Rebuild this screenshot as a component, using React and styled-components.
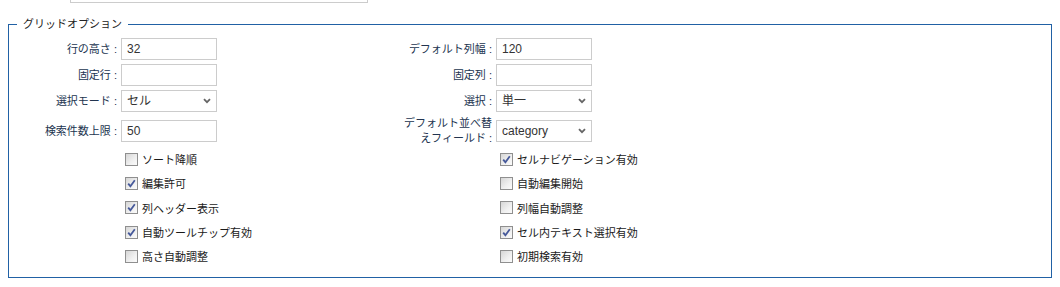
import React from 'react';
import styled, { createGlobalStyle } from 'styled-components';

const GlobalStyle = createGlobalStyle`
  html, body {
    margin: 0;
    padding: 0;
    background: #fff;
  }
  body {
    font-family: 'Liberation Sans', 'Noto Sans CJK JP', sans-serif;
    color: #222;
  }
`;

const Page = styled.div`
  padding: 0 8px;
`;

/* bottom edge of a text box that sits above, mostly scrolled out */
const TopStub = styled.div`
  margin-left: 62px;
  width: 296px;
  height: 2px;
  border: 1px solid #ccc;
  border-top: none;
`;

const Fieldset = styled.fieldset`
  margin: 14px 0 0;
  padding: 7px 8px 11px;
  border: 1px solid #2161a5;
  min-width: 0;
`;

const Legend = styled.legend`
  padding: 0 6px;
  font-size: 11px;
  line-height: 14px;
  color: #222;
`;

const Grid = styled.div`
  display: grid;
  grid-template-columns: 100px 273px 94px 1fr;
  column-gap: 4px;
  row-gap: 4px;
  align-items: center;
`;

const Label = styled.label`
  grid-column: ${(p) => p.col};
  text-align: right;
  font-size: 11px;
  line-height: 15px;
  color: #22344f;
`;

const Control = styled.div`
  grid-column: ${(p) => p.col};
  display: flex;
  align-items: center;
  min-height: 22px;
`;

const TextBox = styled.input`
  box-sizing: border-box;
  width: 96px;
  height: 22px;
  margin: 0;
  padding: 0 5px;
  border: 1px solid #ccc;
  border-radius: 0;
  font-family: 'Liberation Sans', 'Noto Sans CJK JP', sans-serif;
  font-size: 12px;
  color: #333;
  outline: none;
`;

const SelectWrap = styled.div`
  position: relative;
  width: 96px;
  height: 22px;
`;

const Select = styled.select`
  appearance: none;
  box-sizing: border-box;
  width: 100%;
  height: 100%;
  margin: 0;
  padding: 0 18px 0 5px;
  border: 1px solid #ccc;
  border-radius: 0;
  background: #fff;
  font-family: 'Liberation Sans', 'Noto Sans CJK JP', sans-serif;
  font-size: 12px;
  color: #333;
  outline: none;
`;

const Chevron = styled.svg`
  position: absolute;
  right: 6px;
  top: 8px;
  pointer-events: none;
`;

const CheckSection = styled.div`
  grid-column: 1 / -1;
  display: grid;
  grid-template-columns: 100px 273px 94px 1fr;
  column-gap: 4px;
  row-gap: 4px;
  margin-top: -1px;
`;

const CheckRow = styled.label`
  grid-column: ${(p) => p.col};
  display: flex;
  align-items: center;
  gap: 4px;
  height: 20.3px;
  padding-left: 4px;
  font-size: 11px;
  color: #1a1a1a;
`;

const Box = styled.span`
  box-sizing: border-box;
  width: 13px;
  height: 13px;
  flex: none;
  border: 1px solid #8f8f8f;
  background: linear-gradient(135deg, #d6d6d6 0%, #f0f0f0 60%, #fbfbfb 100%);
  display: flex;
  align-items: center;
  justify-content: center;
`;

const Check = ({ on }) => (
  <Box>
    {on && (
      <svg width="9" height="9" viewBox="0 0 9 9">
        <path d="M1.2 4.6 L3.4 7.2 L7.8 1.2" fill="none" stroke="#46599a" strokeWidth="1.8" />
      </svg>
    )}
  </Box>
);

const SelectField = ({ value, options }) => (
  <SelectWrap>
    <Select defaultValue={value}>
      {options.map((o) => (
        <option key={o}>{o}</option>
      ))}
    </Select>
    <Chevron width="8" height="6" viewBox="0 0 8 6">
      <path d="M1 1.2 L4 4.2 L7 1.2" fill="none" stroke="#666" strokeWidth="1.8" />
    </Chevron>
  </SelectWrap>
);

const leftChecks = [
  { text: 'ソート降順', on: false },
  { text: '編集許可', on: true },
  { text: '列ヘッダー表示', on: true },
  { text: '自動ツールチップ有効', on: true },
  { text: '高さ自動調整', on: false },
];

const rightChecks = [
  { text: 'セルナビゲーション有効', on: true },
  { text: '自動編集開始', on: false },
  { text: '列幅自動調整', on: false },
  { text: 'セル内テキスト選択有効', on: true },
  { text: '初期検索有効', on: false },
];

export default function App() {
  return (
    <Page>
      <GlobalStyle />
      <TopStub />
      <Fieldset>
        <Legend>グリッドオプション</Legend>
        <Grid>
          <Label col={1}>行の高さ :</Label>
          <Control col={2}><TextBox defaultValue="32" /></Control>
          <Label col={3}>デフォルト列幅 :</Label>
          <Control col={4}><TextBox defaultValue="120" /></Control>

          <Label col={1}>固定行 :</Label>
          <Control col={2}><TextBox defaultValue="" /></Control>
          <Label col={3}>固定列 :</Label>
          <Control col={4}><TextBox defaultValue="" /></Control>

          <Label col={1}>選択モード :</Label>
          <Control col={2}><SelectField value="セル" options={['セル', '行', '列']} /></Control>
          <Label col={3}>選択 :</Label>
          <Control col={4}><SelectField value="単一" options={['単一', '複数']} /></Control>

          <Label col={1}>検索件数上限 :</Label>
          <Control col={2}><TextBox defaultValue="50" /></Control>
          <Label col={3}>デフォルト並べ替えフィールド :</Label>
          <Control col={4}><SelectField value="category" options={['category', 'name']} /></Control>

          <CheckSection>
            {leftChecks.map((c, i) => (
              <React.Fragment key={c.text}>
                <CheckRow col={2}>
                  <Check on={c.on} />
                  {c.text}
                </CheckRow>
                <CheckRow col={4}>
                  <Check on={rightChecks[i].on} />
                  {rightChecks[i].text}
                </CheckRow>
              </React.Fragment>
            ))}
          </CheckSection>
        </Grid>
      </Fieldset>
    </Page>
  );
}
